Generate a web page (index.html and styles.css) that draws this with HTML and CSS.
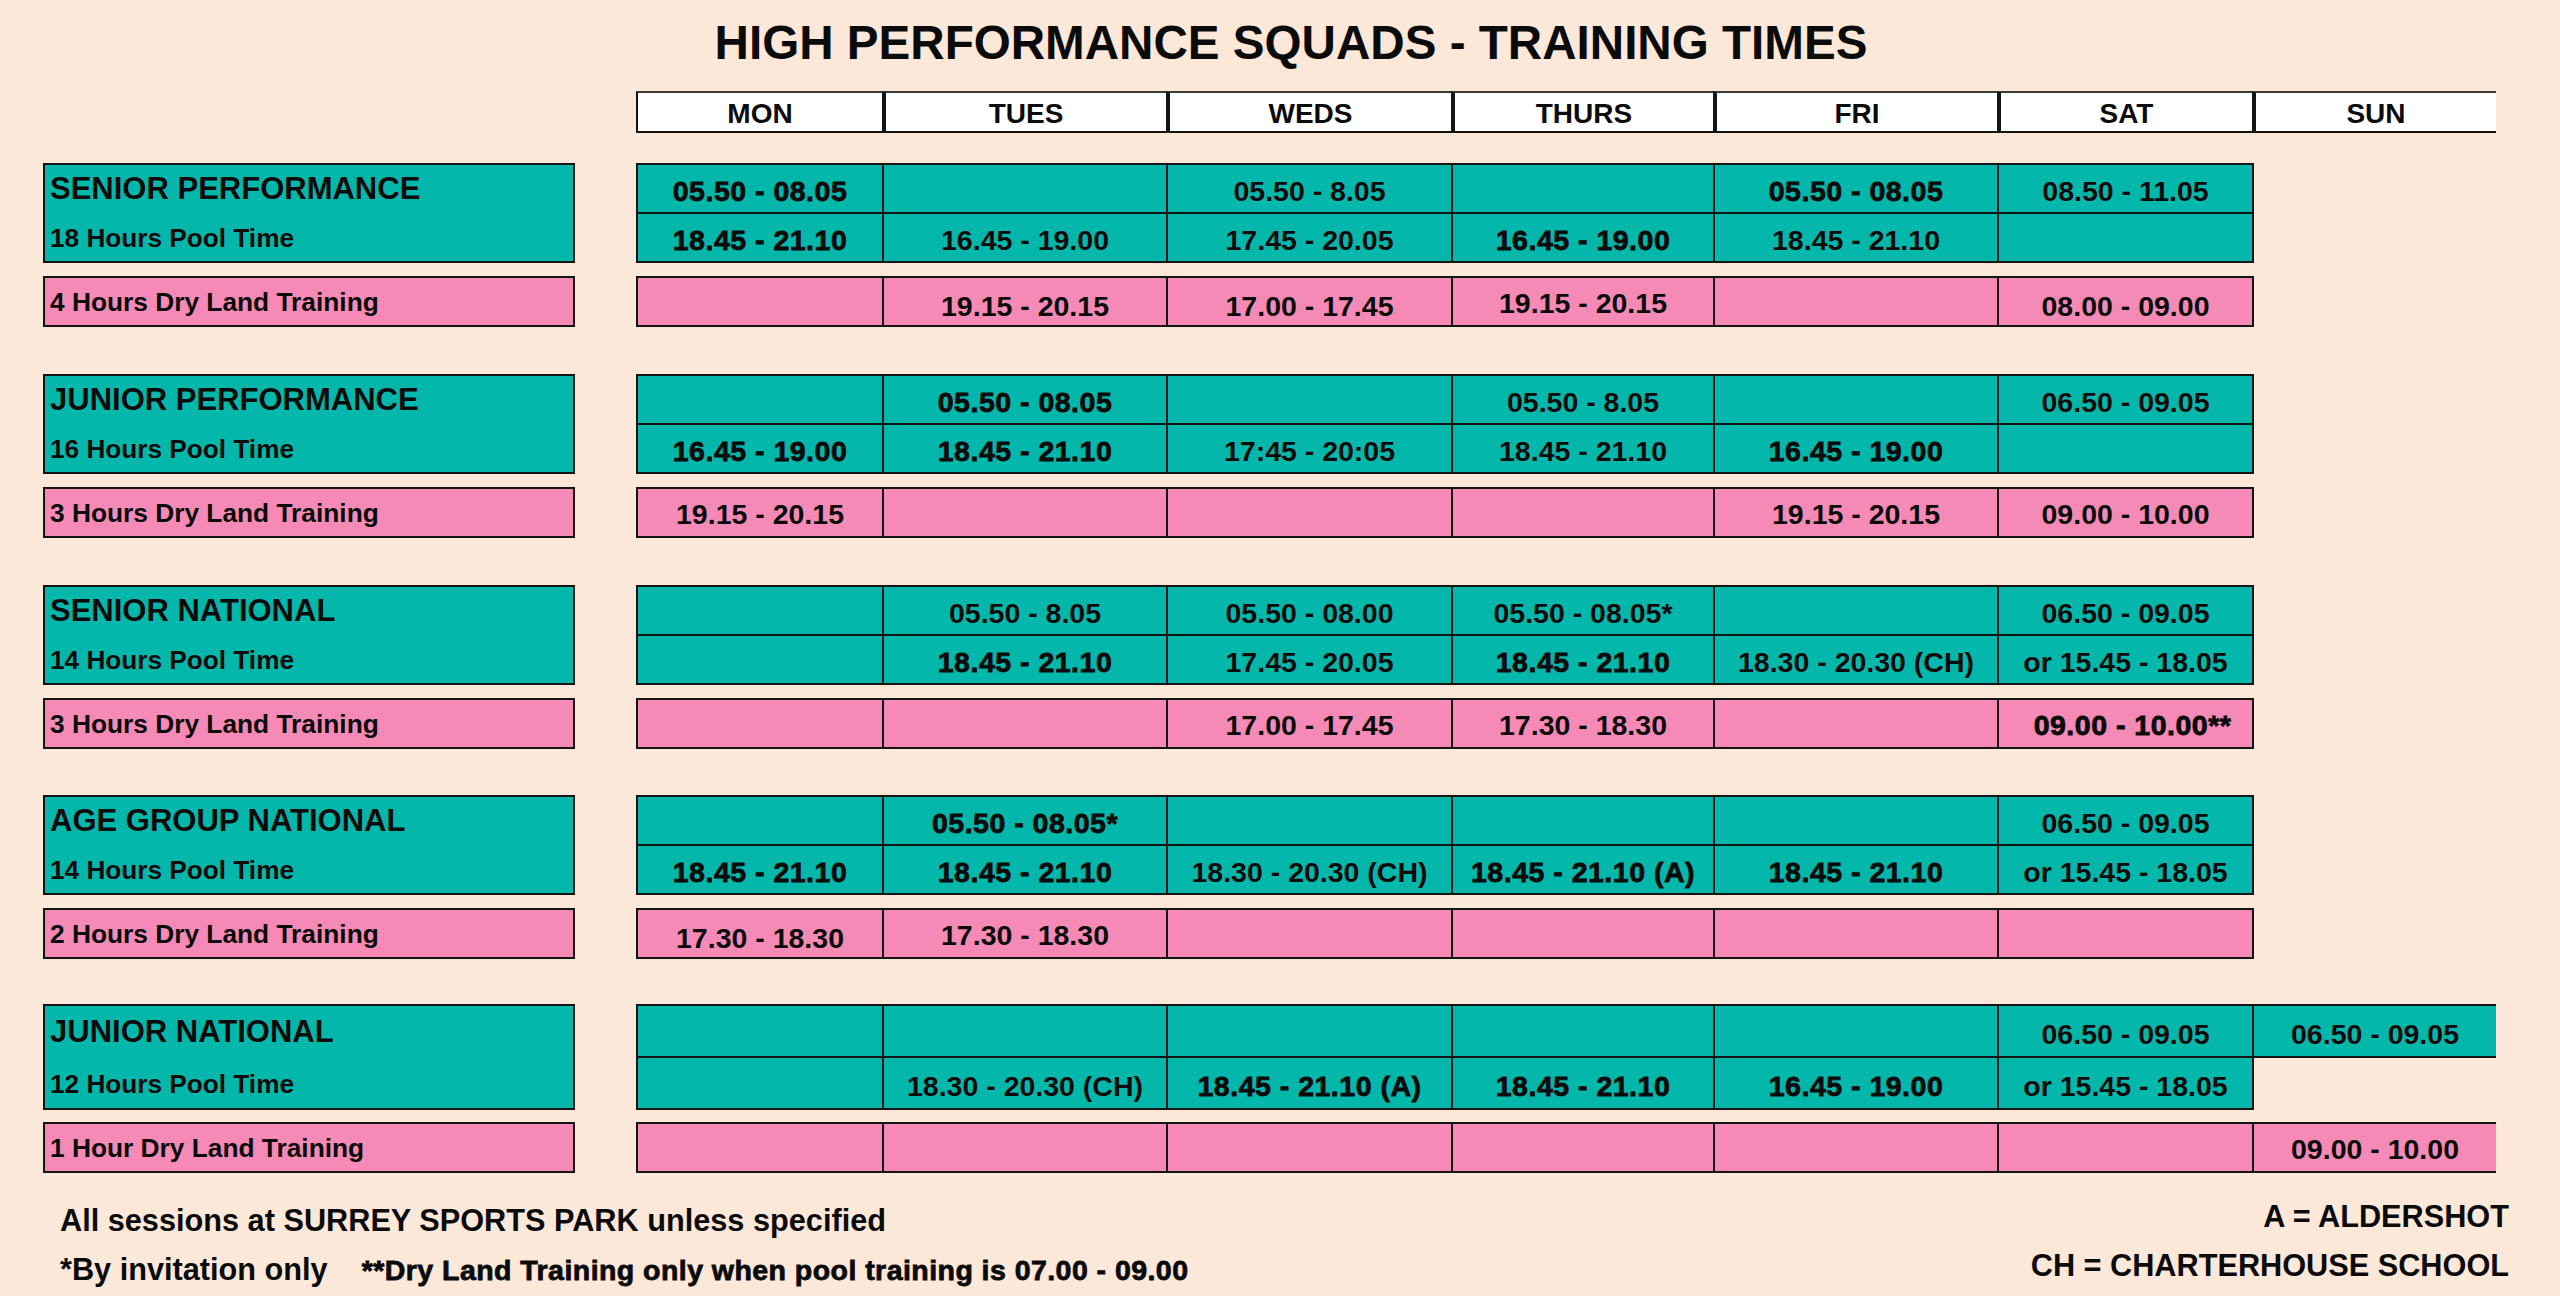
FILE: index.html
```html
<!DOCTYPE html>
<html lang="en">
<head>
<meta charset="utf-8">
<title>High Performance Squads - Training Times</title>
<link rel="stylesheet" href="styles.css">
</head>
<body>
<main class="page">
  <h1 class="title">HIGH PERFORMANCE SQUADS - TRAINING TIMES</h1>

  <div class="board">
    <div class="head">
      <div class="d">MON</div>
      <div class="d">TUES</div>
      <div class="d">WEDS</div>
      <div class="d">THURS</div>
      <div class="d">FRI</div>
      <div class="d">SAT</div>
      <div class="d">SUN</div>
    </div>

    <section class="squad">
      <div class="lbl pool"><span class="name">SENIOR PERFORMANCE</span><span class="hours">18 Hours Pool Time</span></div>
      <div class="slots pool">
        <div class="c h">05.50 - 08.05</div><div class="c"></div><div class="c">05.50 - 8.05</div><div class="c"></div><div class="c h">05.50 - 08.05</div><div class="c">08.50 - 11.05</div>
        <div class="c h">18.45 - 21.10</div><div class="c">16.45 - 19.00</div><div class="c">17.45 - 20.05</div><div class="c h">16.45 - 19.00</div><div class="c">18.45 - 21.10</div><div class="c"></div>
      </div>
      <div class="lbl dry">4 Hours Dry Land Training</div>
      <div class="slots dry">
        <div class="c"></div><div class="c low">19.15 - 20.15</div><div class="c low">17.00 - 17.45</div><div class="c">19.15 - 20.15</div><div class="c"></div><div class="c low">08.00 - 09.00</div>
      </div>
    </section>

    <section class="squad">
      <div class="lbl pool"><span class="name">JUNIOR PERFORMANCE</span><span class="hours">16 Hours Pool Time</span></div>
      <div class="slots pool">
        <div class="c"></div><div class="c h">05.50 - 08.05</div><div class="c"></div><div class="c">05.50 - 8.05</div><div class="c"></div><div class="c">06.50 - 09.05</div>
        <div class="c h">16.45 - 19.00</div><div class="c h">18.45 - 21.10</div><div class="c">17:45 - 20:05</div><div class="c">18.45 - 21.10</div><div class="c h">16.45 - 19.00</div><div class="c"></div>
      </div>
      <div class="lbl dry">3 Hours Dry Land Training</div>
      <div class="slots dry">
        <div class="c">19.15 - 20.15</div><div class="c"></div><div class="c"></div><div class="c"></div><div class="c">19.15 - 20.15</div><div class="c">09.00 - 10.00</div>
      </div>
    </section>

    <section class="squad">
      <div class="lbl pool"><span class="name">SENIOR NATIONAL</span><span class="hours">14 Hours Pool Time</span></div>
      <div class="slots pool">
        <div class="c"></div><div class="c">05.50 - 8.05</div><div class="c">05.50 - 08.00</div><div class="c">05.50 - 08.05*</div><div class="c"></div><div class="c">06.50 - 09.05</div>
        <div class="c"></div><div class="c h">18.45 - 21.10</div><div class="c">17.45 - 20.05</div><div class="c h">18.45 - 21.10</div><div class="c">18.30 - 20.30 (CH)</div><div class="c">or 15.45 - 18.05</div>
      </div>
      <div class="lbl dry">3 Hours Dry Land Training</div>
      <div class="slots dry">
        <div class="c"></div><div class="c"></div><div class="c">17.00 - 17.45</div><div class="c">17.30 - 18.30</div><div class="c"></div><div class="c h">09.00 - 10.00<span class="stars">**</span></div>
      </div>
    </section>

    <section class="squad nudge">
      <div class="lbl pool"><span class="name">AGE GROUP NATIONAL</span><span class="hours">14 Hours Pool Time</span></div>
      <div class="slots pool">
        <div class="c"></div><div class="c h">05.50 - 08.05*</div><div class="c"></div><div class="c"></div><div class="c"></div><div class="c">06.50 - 09.05</div>
        <div class="c h">18.45 - 21.10</div><div class="c h">18.45 - 21.10</div><div class="c">18.30 - 20.30 (CH)</div><div class="c h">18.45 - 21.10 (A)</div><div class="c h">18.45 - 21.10</div><div class="c">or 15.45 - 18.05</div>
      </div>
      <div class="lbl dry">2 Hours Dry Land Training</div>
      <div class="slots dry">
        <div class="c low">17.30 - 18.30</div><div class="c">17.30 - 18.30</div><div class="c"></div><div class="c"></div><div class="c"></div><div class="c"></div>
      </div>
    </section>

    <section class="squad tall">
      <div class="lbl pool"><span class="name">JUNIOR NATIONAL</span><span class="hours">12 Hours Pool Time</span></div>
      <div class="slots pool seven">
        <div class="c"></div><div class="c"></div><div class="c"></div><div class="c"></div><div class="c"></div><div class="c">06.50 - 09.05</div><div class="c">06.50 - 09.05</div>
        <div class="c"></div><div class="c">18.30 - 20.30 (CH)</div><div class="c h">18.45 - 21.10 (A)</div><div class="c h">18.45 - 21.10</div><div class="c h">16.45 - 19.00</div><div class="c">or 15.45 - 18.05</div><div class="c none"></div>
      </div>
      <div class="lbl dry">1 Hour Dry Land Training</div>
      <div class="slots dry seven">
        <div class="c"></div><div class="c"></div><div class="c"></div><div class="c"></div><div class="c"></div><div class="c"></div><div class="c">09.00 - 10.00</div>
      </div>
    </section>
  </div>

  <footer class="notes">
    <div class="notes-left">
      <p>All sessions at SURREY SPORTS PARK unless specified</p>
      <p>*By invitation only<span class="h dryonly">**Dry Land Training only when pool training is 07.00 - 09.00</span></p>
    </div>
    <div class="notes-right">
      <p>A = ALDERSHOT</p>
      <p>CH = CHARTERHOUSE SCHOOL</p>
    </div>
  </footer>
</main>
</body>
</html>
```

FILE: styles.css
```css
:root {
  --bg: #fce8d9;
  --teal: #04b7ab;
  --pink: #f58ab6;
  --ink: #0b0b0b;
  --line: #141414;
  --cols6: 246px 284px 285px 262px 284px 255px;
}

html, body {
  margin: 0;
  padding: 0;
}

body {
  background: var(--bg);
  color: var(--ink);
  font-family: "Liberation Sans", Arial, sans-serif;
  font-weight: 700;
  width: 2560px;
  height: 1296px;
  overflow: hidden;
}

.page {
  display: flex;
  flex-direction: column;
}

.title {
  margin: 0;
  padding: 15px 0 0 22px;
  font-size: 47.6px;
  line-height: 55px;
  font-weight: 700;
  text-align: center;
}

.board {
  padding-left: 43px;
  display: flex;
  flex-direction: column;
}

/* Day header */
.head {
  margin: 21px 0 0 593px;
  display: grid;
  grid-template-columns: var(--cols6) 244px;
  width: 1860px;
}

.d {
  box-sizing: border-box;
  height: 42px;
  background: #fff;
  border-top: 2px solid #3a3a3a;
  border-bottom: 2px solid var(--line);
  border-left: 4px solid var(--line);
  display: flex;
  align-items: center;
  justify-content: center;
  padding-top: 3px;
  font-size: 28px;
  line-height: 1;
}

.d:first-child {
  border-left-width: 2px;
}

/* Squad blocks */
.squad {
  display: grid;
  grid-template-columns: 532px auto;
  column-gap: 61px;
  row-gap: 13px;
  margin-top: 47px;
}

.head + .squad {
  margin-top: 30px;
}

.squad.nudge {
  margin-top: 46px;
}

.squad.tall {
  margin-top: 45px;
  row-gap: 12px;
}

.lbl {
  box-sizing: border-box;
  border: 2px solid var(--line);
  padding-left: 5px;
  white-space: nowrap;
}

.lbl.pool {
  background: var(--teal);
  display: flex;
  flex-direction: column;
  justify-content: space-between;
  padding-top: 8px;
  padding-bottom: 10px;
}

.tall .lbl.pool {
  padding-top: 10px;
  padding-bottom: 11px;
}

.name {
  font-size: 31px;
  line-height: 1;
}

.hours {
  font-size: 26.2px;
  line-height: 1;
}

.lbl.dry {
  background: var(--pink);
  display: flex;
  align-items: center;
  padding-top: 2px;
  font-size: 26.3px;
  line-height: 1;
}

/* Time slots */
.slots {
  justify-self: start;
  display: grid;
  grid-template-columns: var(--cols6);
  border-top: 2px solid var(--line);
  border-right: 2px solid var(--line);
}

.slots.seven {
  grid-template-columns: var(--cols6) 244px;
  border-right: none;
}

.c {
  box-sizing: border-box;
  height: 49px;
  border-left: 2px solid var(--line);
  border-bottom: 2px solid var(--line);
  display: flex;
  align-items: center;
  justify-content: center;
  padding-top: 6px;
  font-size: 28.5px;
  line-height: 1;
  white-space: nowrap;
}

.tall .pool .c {
  height: 52px;
}

.pool .c {
  background: var(--teal);
}

.dry .c {
  background: var(--pink);
  padding-top: 3px;
}

.dry .c.low {
  padding-top: 9px;
}

.pool .c.none {
  background: transparent;
  border-bottom: none;
}

.h {
  -webkit-text-stroke: 0.8px var(--ink);
}

.c.h {
  letter-spacing: 0.5px;
}

.stars {
  margin-right: -14px;
}

/* Footnotes */
.notes {
  margin-top: 19px;
  display: flex;
  justify-content: space-between;
  align-items: flex-start;
  padding: 0 51px 0 60px;
  font-size: 30.7px;
  line-height: 49px;
}

.notes p {
  margin: 0;
  white-space: nowrap;
}

.notes-left {
  padding-top: 4px;
}

.notes-right {
  text-align: right;
}

.dryonly {
  margin-left: 34px;
  font-size: 28.5px;
  letter-spacing: 0.45px;
}
```
